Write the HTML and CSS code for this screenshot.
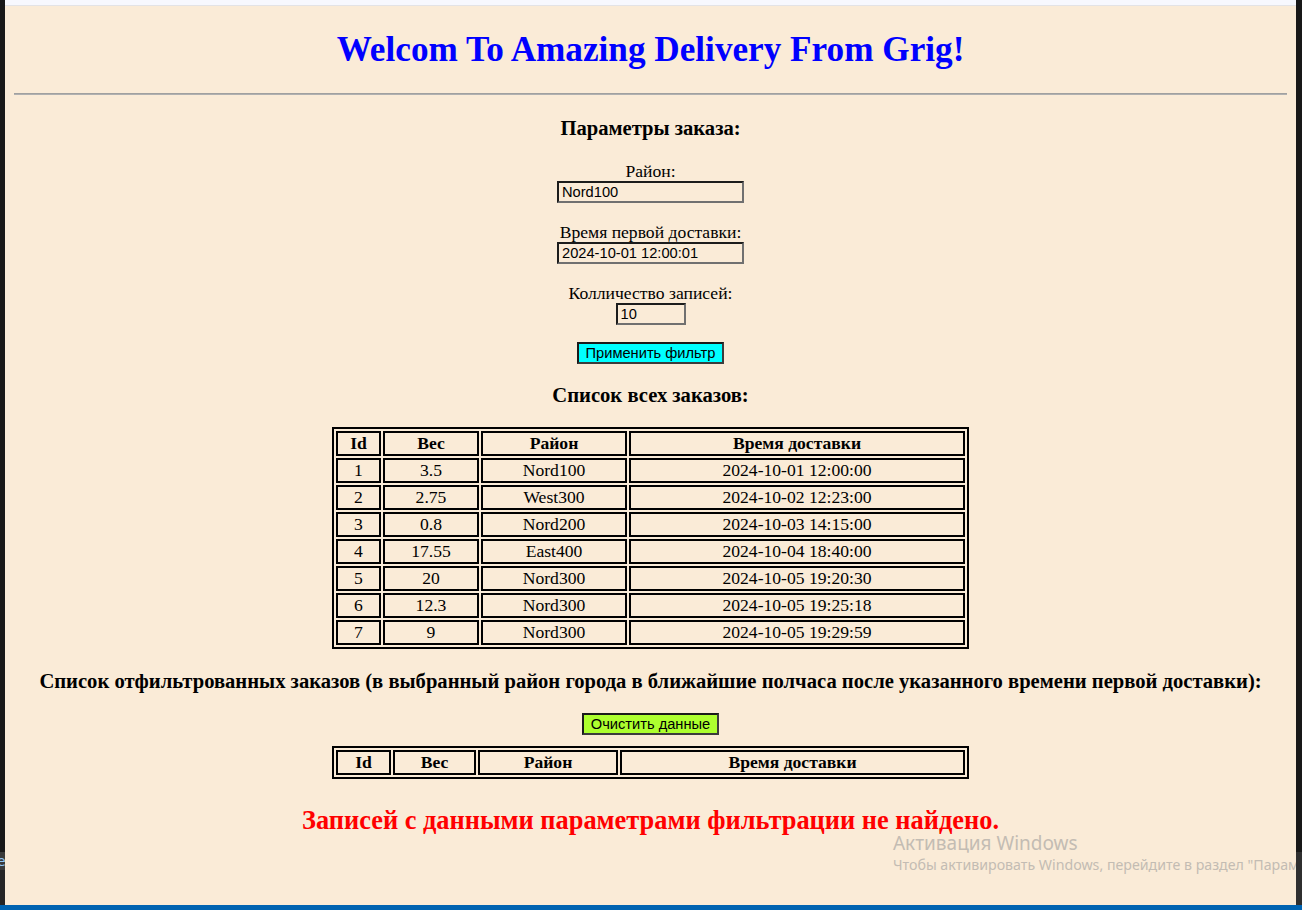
FILE: index.html
```html
<!DOCTYPE html>
<html lang="ru">
<head>
<meta charset="utf-8">
<title>Amazing Delivery</title>
<link rel="stylesheet" href="styles.css">
</head>
<body>
<div class="screen">
  <div class="edge edge-left">
    <div class="edge-top"></div>
    <div class="edge-tab">e</div>
    <div class="edge-rest"></div>
  </div>
  <div class="window">
    <div class="topbar"></div>
    <div class="viewport">
      <div class="page">
        <h1 class="title">Welcom To Amazing Delivery From Grig!</h1>
        <hr class="divider">
        <h3 class="section">Параметры заказа:</h3>
        <form class="order-form">
          <div class="field">
            <label class="field-label" for="district">Район:</label>
            <input class="text-input" id="district" type="text" value="Nord100">
          </div>
          <div class="field">
            <label class="field-label" for="first">Время первой доставки:</label>
            <input class="text-input" id="first" type="text" value="2024-10-01 12:00:01">
          </div>
          <div class="field">
            <label class="field-label" for="count">Колличество записей:</label>
            <input class="text-input short" id="count" type="text" value="10">
          </div>
          <button class="btn btn-apply" type="button">Применить фильтр</button>
        </form>
        <h3 class="section section-list">Список всех заказов:</h3>
        <table class="orders">
          <thead>
            <tr><th class="c-id">Id</th><th class="c-w">Вес</th><th class="c-d">Район</th><th class="c-t">Время доставки</th></tr>
          </thead>
          <tbody>
            <tr><td>1</td><td>3.5</td><td>Nord100</td><td>2024-10-01 12:00:00</td></tr>
            <tr><td>2</td><td>2.75</td><td>West300</td><td>2024-10-02 12:23:00</td></tr>
            <tr><td>3</td><td>0.8</td><td>Nord200</td><td>2024-10-03 14:15:00</td></tr>
            <tr><td>4</td><td>17.55</td><td>East400</td><td>2024-10-04 18:40:00</td></tr>
            <tr><td>5</td><td>20</td><td>Nord300</td><td>2024-10-05 19:20:30</td></tr>
            <tr><td>6</td><td>12.3</td><td>Nord300</td><td>2024-10-05 19:25:18</td></tr>
            <tr><td>7</td><td>9</td><td>Nord300</td><td>2024-10-05 19:29:59</td></tr>
          </tbody>
        </table>
        <h3 class="section section-filtered">Список отфильтрованных заказов (в выбранный район города в ближайшие полчаса после указанного времени первой доставки):</h3>
        <div class="actions">
          <button class="btn btn-clear" type="button">Очистить данные</button>
        </div>
        <table class="orders orders-empty">
          <thead>
            <tr><th class="e-id">Id</th><th class="e-w">Вес</th><th class="e-d">Район</th><th class="e-t">Время доставки</th></tr>
          </thead>
        </table>
        <h2 class="not-found">Записей с данными параметрами фильтрации не найдено.</h2>
      </div>
      <div class="watermark">
        <div class="wm-title">Активация Windows</div>
        <div class="wm-text">Чтобы активировать Windows, перейдите в раздел "Параметры".</div>
      </div>
    </div>
  </div>
  <div class="edge edge-right">
    <div class="edge-top"></div>
    <div class="edge-rest"></div>
  </div>
  <div class="taskbar"></div>
</div>
</body>
</html>
```
FILE: styles.css
```css
html, body {
  margin: 0;
  padding: 0;
}
body {
  width: 1302px;
  height: 910px;
  overflow: hidden;
  background: #181818;
}
.screen {
  display: grid;
  grid-template-columns: 5px 1291px 6px;
  grid-template-rows: 905px 5px;
  width: 1302px;
  height: 910px;
}
.edge {
  display: flex;
  flex-direction: column;
  background: #181818;
  overflow: hidden;
}
.edge-top {
  height: 852px;
  background: #181818;
}
.edge-tab {
  height: 18px;
  background: #3a3a3a;
  color: #8fc6f5;
  font: 14px "DejaVu Sans", sans-serif;
  line-height: 18px;
  text-indent: -3px;
  overflow: hidden;
}
.edge-rest {
  flex: 1;
  background: #252526;
}
.edge-right .edge-rest {
  background: #2f2f2f;
}
.window {
  display: flex;
  flex-direction: column;
  background: #faebd7;
}
.topbar {
  height: 5px;
  background: #f7f8fe;
  border-bottom: 1px solid #e3e3e6;
}
.viewport {
  flex: 1;
  position: relative;
  overflow: hidden;
  background: #faebd7;
  font-family: "Liberation Serif", "Times New Roman", serif;
  font-size: 17.6px;
  color: #000;
}
.page {
  padding: 0 9px;
}
.title {
  margin: 23.6px 0;
  font-size: 35.2px;
  line-height: 40px;
  font-weight: bold;
  color: #0000ff;
  text-align: center;
}
.divider {
  margin: 0;
  height: 0;
  border: 0;
  border-top: 1px solid #a0a0a0;
  border-bottom: 1px solid #b0b0b0;
}
.section {
  margin: 21px 0 0;
  font-size: 20.6px;
  line-height: 24px;
  font-weight: bold;
  text-align: center;
}
.section-list {
  margin-top: 19.3px;
}
.section-filtered {
  margin-top: 20px;
}
.order-form {
  margin: 20.5px 0 0;
  display: flex;
  flex-direction: column;
  align-items: center;
  gap: 19px;
}
.field {
  display: flex;
  flex-direction: column;
  align-items: center;
}
.field-label {
  line-height: 20px;
}
.text-input {
  box-sizing: border-box;
  width: 187px;
  height: 22px;
  margin: 0;
  padding: 1px 3px;
  font: 14.67px "Liberation Sans", Arial, sans-serif;
  color: #000;
  background: transparent;
  border: 2px solid;
  border-color: #1c1c1c #707070 #707070 #1c1c1c;
  outline: none;
}
.text-input.short {
  width: 70px;
}
.btn {
  box-sizing: border-box;
  height: 22px;
  margin: 0;
  padding: 0 6px;
  font: 14.67px "Liberation Sans", Arial, sans-serif;
  color: #000;
  border: 2px solid;
  border-color: #1a1a1a #3c3c3c #3c3c3c #1a1a1a;
  cursor: pointer;
}
.btn-apply {
  width: 147px;
  margin-top: -2px;
  background: #00ffff;
}
.btn-clear {
  width: 137px;
  background: #adff2f;
}
.actions {
  display: flex;
  justify-content: center;
  margin-top: 20.5px;
}
.orders {
  margin: 20px auto 0;
  width: 637px;
  table-layout: fixed;
  border: 2px solid #000;
  border-spacing: 2px;
}
.orders-empty {
  margin-top: 11px;
}
.orders th,
.orders td {
  box-sizing: border-box;
  border: 2px solid #000;
  padding: 1px;
  line-height: 19px;
  text-align: center;
}
.c-id { width: 45px; }
.c-w { width: 96px; }
.c-d { width: 146px; }
.c-t { width: 336px; }
.e-id { width: 55px; }
.e-w { width: 83px; }
.e-d { width: 140px; }
.e-t { width: 345px; }
.not-found {
  margin: 27px 0 0;
  font-size: 26.4px;
  line-height: 28px;
  font-weight: bold;
  color: #ff0000;
  text-align: center;
}
.watermark {
  position: absolute;
  left: 888px;
  top: 829px;
  white-space: nowrap;
  color: #c3bcb3;
  font-family: "Noto Sans", "Open Sans", sans-serif;
  pointer-events: none;
}
.wm-title {
  font-size: 19px;
  line-height: 16px;
}
.wm-text {
  margin-top: 6px;
  font-size: 14.2px;
  line-height: 16px;
}
.taskbar {
  grid-column: 1 / -1;
  background: #0063b1;
}
```
